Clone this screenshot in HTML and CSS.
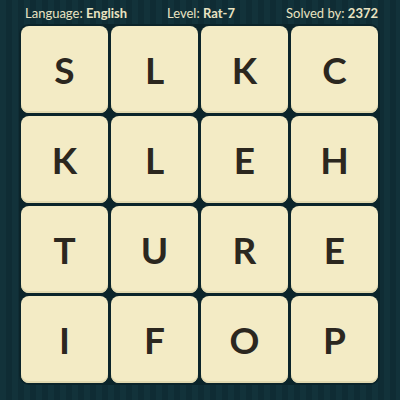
FILE: index.html
```html
<!DOCTYPE html>
<html>
<head>
<meta charset="utf-8">
<link rel="stylesheet" href="styles.css">
</head>
<body>
<div class="page">
  <div class="header">
    <div class="stat">Language: <b>English</b></div>
    <div class="stat">Level: <b>Rat-7</b></div>
    <div class="stat">Solved by: <b>2372</b></div>
  </div>
  <div class="board">
    <div class="tile">S</div><div class="tile">L</div><div class="tile">K</div><div class="tile">C</div>
    <div class="tile">K</div><div class="tile">L</div><div class="tile">E</div><div class="tile">H</div>
    <div class="tile">T</div><div class="tile">U</div><div class="tile">R</div><div class="tile">E</div>
    <div class="tile">I</div><div class="tile">F</div><div class="tile">O</div><div class="tile">P</div>
  </div>
</div>
</body>
</html>
```
FILE: styles.css
```css
html, body {
  margin: 0;
  padding: 0;
}
body {
  width: 400px;
  height: 400px;
  overflow: hidden;
  background: repeating-linear-gradient(90deg, #12323a 0 6px, #0f2c34 6px 12px);
  font-family: Lato, "Noto Sans", sans-serif;
}
.page {
  display: flex;
  flex-direction: column;
}
.header {
  display: grid;
  grid-template-columns: 142px 119px auto;
  padding-left: 25px;
  height: 23px;
  align-items: center;
  color: #e9e3c2;
  font-size: 13px;
  line-height: 16px;
  padding-top: 1px;
}
.stat b {
  font-weight: 700;
}
.board {
  margin-left: 19px;
  width: 361px;
  padding: 2px;
  box-sizing: border-box;
  background: #0b242a;
  border-radius: 10px;
  display: grid;
  grid-template-columns: repeat(4, 87px);
  grid-auto-rows: 87px;
  gap: 3px;
}
.tile {
  background: #f3ebc5;
  border-radius: 8px;
  box-shadow: inset 0 -2px 0 #e2d9b0;
  display: flex;
  align-items: center;
  justify-content: center;
  color: #2b271f;
  font-size: 37px;
  font-weight: 700;
}
```
